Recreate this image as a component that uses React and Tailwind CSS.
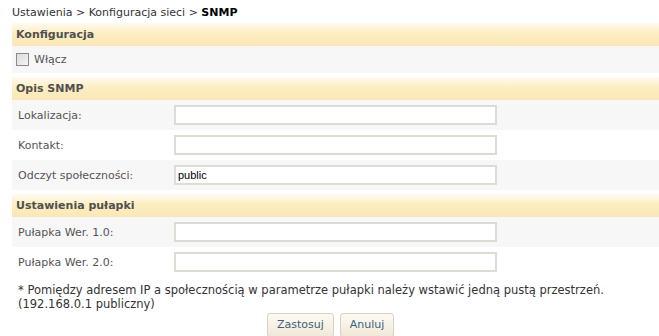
import React from 'react';

const font = { fontFamily: '"DejaVu Sans", Verdana, sans-serif' };

function Header({ children }) {
  return (
    <div className="h-[23px] flex items-center px-1 font-bold text-[#505050] bg-gradient-to-b from-[#fffaf0] via-[#fcedbf] to-[#fae8b8] border-b border-[#fde3b8]">
      {children}
    </div>
  );
}

function Row({ label, value, gray }) {
  return (
    <div className={`h-[30px] flex items-center ${gray ? 'bg-[#f7f7f7]' : 'bg-white'}`}>
      <div className="w-[162px] pl-[6px] text-[#555]">{label}</div>
      <input
        type="text"
        defaultValue={value}
        className="w-[323px] h-5 border-2 border-[#dcdcd4] bg-white px-[2px] text-[11px] text-black outline-none"
        style={{ fontFamily: '"Liberation Sans", Arial, sans-serif' }}
      />
    </div>
  );
}

export default function App() {
  return (
    <div className="w-[659px] h-[336px] overflow-hidden bg-white text-[11px] leading-[13px]" style={font}>
      <div className="h-[23px] pl-3 pt-[6px] text-[#333]">
        Ustawienia &gt; Konfiguracja sieci &gt; <b className="text-black">SNMP</b>
      </div>

      <div className="ml-3">
        <Header>Konfiguracja</Header>
        <div className="h-[27px] flex items-center bg-[#f7f7f7] pl-1 text-[#555]">
          <span className="w-[13px] h-[13px] border border-[#8a8a8a] bg-gradient-to-br from-[#dcdcdc] to-[#f4f4f4] mr-[5px]" />
          Włącz
        </div>

        <div className="h-1" />
        <Header>Opis SNMP</Header>
        <Row label="Lokalizacja:" gray />
        <Row label="Kontakt:" />
        <Row label="Odczyt społeczności:" value="public" gray />

        <div className="h-1" />
        <Header>Ustawienia pułapki</Header>
        <Row label="Pułapka Wer. 1.0:" gray />
        <Row label="Pułapka Wer. 2.0:" />

        <div className="mt-[6px] text-[#333] text-[11.5px] leading-[14px] pl-[6px]">
          * Pomiędzy adresem IP a społecznością w parametrze pułapki należy wstawić jedną pustą przestrzeń.
          <br />
          (192.168.0.1 publiczny)
        </div>

        <div className="flex gap-[6px] pl-[255px] mt-[2px]">
          <button className="h-[24px] px-[9px] pb-[1px] rounded-[3px] border border-[#d9d2c2] bg-gradient-to-b from-[#fdfaf3] to-[#f1e9d8] text-[#3d5f80]">
            Zastosuj
          </button>
          <button className="h-[24px] px-[9px] pb-[1px] rounded-[3px] border border-[#d9d2c2] bg-gradient-to-b from-[#fdfaf3] to-[#f1e9d8] text-[#3d5f80]">
            Anuluj
          </button>
        </div>
      </div>
    </div>
  );
}
